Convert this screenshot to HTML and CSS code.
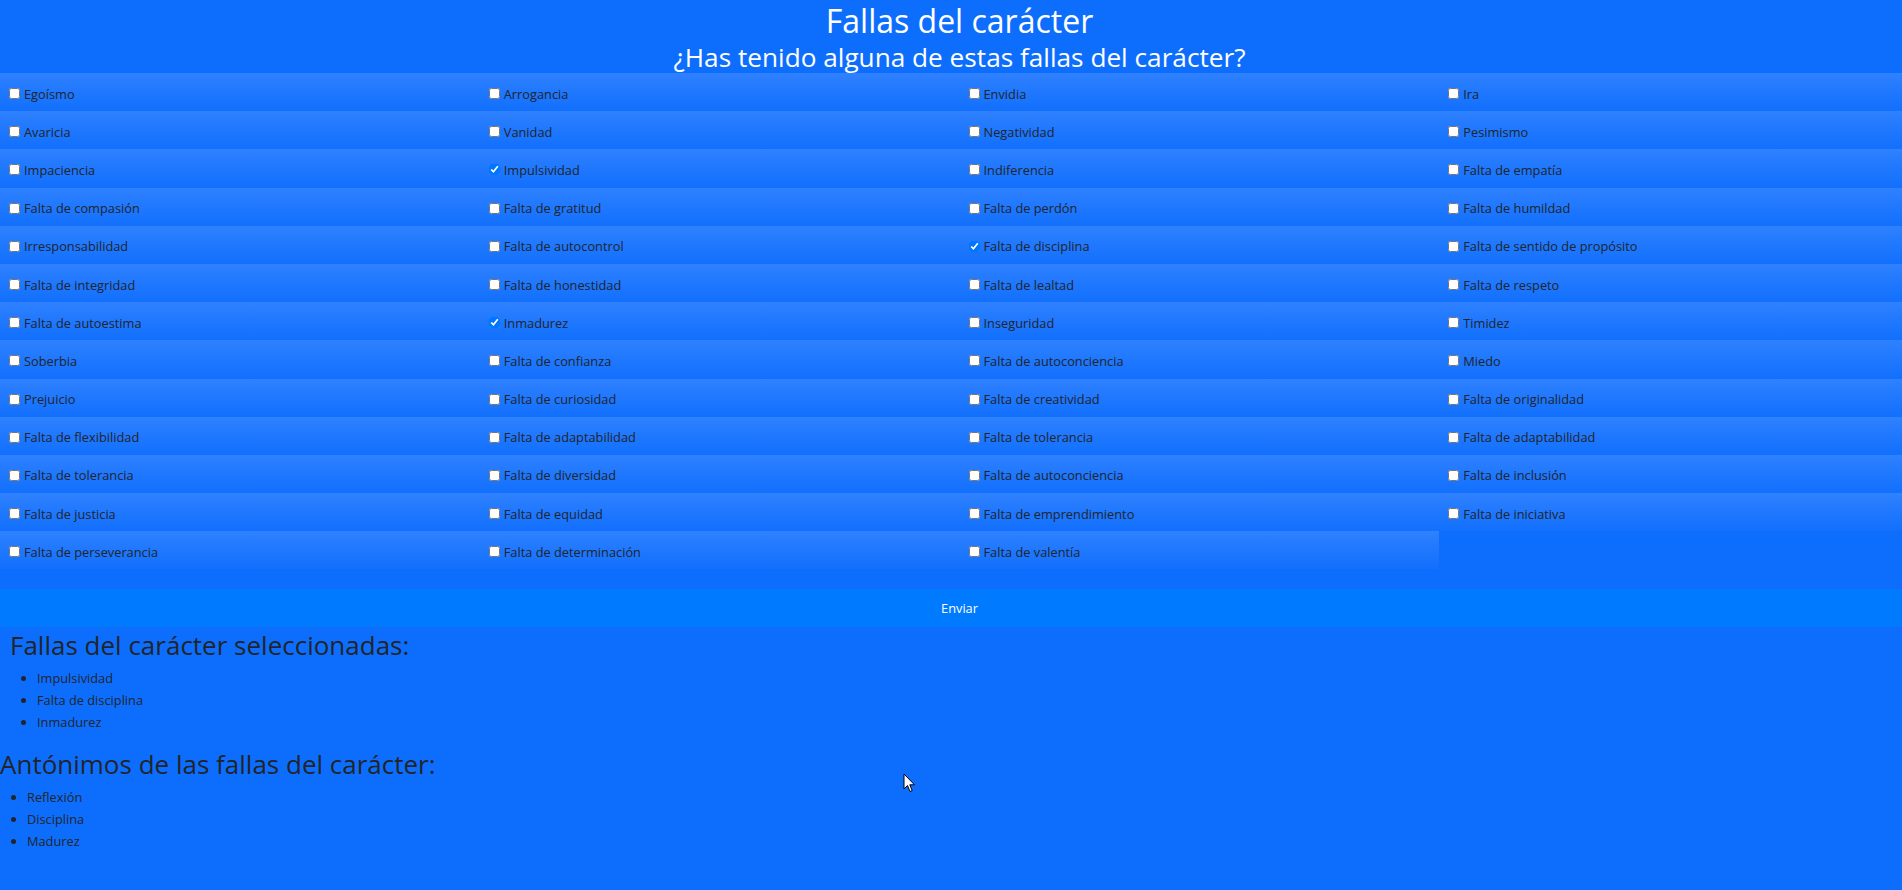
FILE: index.html
```html
<!DOCTYPE html>
<html lang="es">
<head>
<meta charset="utf-8">
<title>Fallas del carácter</title>
<link rel="stylesheet" href="styles.css">
</head>
<body>
<div class="page">
  <header class="header">
    <h1 class="title">Fallas del carácter</h1>
    <p class="subtitle">¿Has tenido alguna de estas fallas del carácter?</p>
  </header>
  <form class="form">
    <div class="grid">
      <label class="item"><input type="checkbox">Egoísmo</label>
      <label class="item"><input type="checkbox">Arrogancia</label>
      <label class="item"><input type="checkbox">Envidia</label>
      <label class="item"><input type="checkbox">Ira</label>
      <label class="item"><input type="checkbox">Avaricia</label>
      <label class="item"><input type="checkbox">Vanidad</label>
      <label class="item"><input type="checkbox">Negatividad</label>
      <label class="item"><input type="checkbox">Pesimismo</label>
      <label class="item"><input type="checkbox">Impaciencia</label>
      <label class="item"><input type="checkbox" checked>Impulsividad</label>
      <label class="item"><input type="checkbox">Indiferencia</label>
      <label class="item"><input type="checkbox">Falta de empatía</label>
      <label class="item"><input type="checkbox">Falta de compasión</label>
      <label class="item"><input type="checkbox">Falta de gratitud</label>
      <label class="item"><input type="checkbox">Falta de perdón</label>
      <label class="item"><input type="checkbox">Falta de humildad</label>
      <label class="item"><input type="checkbox">Irresponsabilidad</label>
      <label class="item"><input type="checkbox">Falta de autocontrol</label>
      <label class="item"><input type="checkbox" checked>Falta de disciplina</label>
      <label class="item"><input type="checkbox">Falta de sentido de propósito</label>
      <label class="item"><input type="checkbox">Falta de integridad</label>
      <label class="item"><input type="checkbox">Falta de honestidad</label>
      <label class="item"><input type="checkbox">Falta de lealtad</label>
      <label class="item"><input type="checkbox">Falta de respeto</label>
      <label class="item"><input type="checkbox">Falta de autoestima</label>
      <label class="item"><input type="checkbox" checked>Inmadurez</label>
      <label class="item"><input type="checkbox">Inseguridad</label>
      <label class="item"><input type="checkbox">Timidez</label>
      <label class="item"><input type="checkbox">Soberbia</label>
      <label class="item"><input type="checkbox">Falta de confianza</label>
      <label class="item"><input type="checkbox">Falta de autoconciencia</label>
      <label class="item"><input type="checkbox">Miedo</label>
      <label class="item"><input type="checkbox">Prejuicio</label>
      <label class="item"><input type="checkbox">Falta de curiosidad</label>
      <label class="item"><input type="checkbox">Falta de creatividad</label>
      <label class="item"><input type="checkbox">Falta de originalidad</label>
      <label class="item"><input type="checkbox">Falta de flexibilidad</label>
      <label class="item"><input type="checkbox">Falta de adaptabilidad</label>
      <label class="item"><input type="checkbox">Falta de tolerancia</label>
      <label class="item"><input type="checkbox">Falta de adaptabilidad</label>
      <label class="item"><input type="checkbox">Falta de tolerancia</label>
      <label class="item"><input type="checkbox">Falta de diversidad</label>
      <label class="item"><input type="checkbox">Falta de autoconciencia</label>
      <label class="item"><input type="checkbox">Falta de inclusión</label>
      <label class="item"><input type="checkbox">Falta de justicia</label>
      <label class="item"><input type="checkbox">Falta de equidad</label>
      <label class="item"><input type="checkbox">Falta de emprendimiento</label>
      <label class="item"><input type="checkbox">Falta de iniciativa</label>
      <label class="item"><input type="checkbox">Falta de perseverancia</label>
      <label class="item"><input type="checkbox">Falta de determinación</label>
      <label class="item"><input type="checkbox">Falta de valentía</label>
    </div>
    <button type="button" class="submit">Enviar</button>
  </form>
  <section class="selected">
    <h2 class="section-title">Fallas del carácter seleccionadas:</h2>
    <ul class="list">
      <li>Impulsividad</li>
      <li>Falta de disciplina</li>
      <li>Inmadurez</li>
    </ul>
  </section>
  <section class="antonyms">
    <h2 class="section-title">Antónimos de las fallas del carácter:</h2>
    <ul class="list">
      <li>Reflexión</li>
      <li>Disciplina</li>
      <li>Madurez</li>
    </ul>
  </section>
  <svg class="cursor" width="13" height="20" viewBox="0 0 13 20" aria-hidden="true">
    <path d="M1 1 L1 16 L4.5 12.5 L7 18.5 L9.2 17.6 L6.8 11.8 L11.5 11.8 Z" fill="#fff" stroke="#000" stroke-width="1" stroke-linejoin="round"/>
  </svg>
</div>
</body>
</html>
```

FILE: styles.css
```css
html {
  background: #0d6efd;
}

body {
  margin: 0;
  overflow: hidden;
  background: #0d6efd;
  font-family: "Open Sans", "Noto Sans", "DejaVu Sans", sans-serif;
  color: #212529;
}

.page {
  position: relative;
  width: 1919px;
  min-height: 890px;
}

.header {
  padding-top: 2px;
  text-align: center;
  color: #ffffff;
}

.title {
  margin: 0;
  font-size: 32px;
  line-height: 38px;
  font-weight: 400;
}

.subtitle {
  margin: 0;
  padding-top: 2px;
  font-size: 26.2px;
  line-height: 31px;
  font-weight: 400;
}

.form {
  margin: 0;
}

.grid {
  display: grid;
  grid-template-columns: repeat(4, 1fr);
  grid-auto-rows: 38.2px;
}

.item {
  display: flex;
  align-items: center;
  box-sizing: border-box;
  padding: 3px 5px 0;
  font-size: 12.8px;
  color: #212529;
  background: linear-gradient(180deg, #2f81ff 0%, #1e77fe 55%, #1270fd 100%);
}

.item input {
  width: 11px;
  height: 11px;
  margin: 3px 4px 3px 4px;
}

.submit {
  display: block;
  width: 100%;
  height: 37.5px;
  margin-top: 20px;
  border: 0;
  padding: 0;
  background: #007bff;
  color: #ffffff;
  font-family: inherit;
  font-size: 12.8px;
}

.selected {
  padding-left: 10px;
}

.section-title {
  margin: 2px 0 0;
  font-size: 26px;
  line-height: 32px;
  font-weight: 400;
  color: #212529;
}

.antonyms .section-title {
  margin-top: 15px;
}

.list {
  margin: 6px 0 0;
  padding-left: 27px;
  font-size: 12.8px;
  line-height: 22px;
}

.cursor {
  position: absolute;
  left: 903px;
  top: 773px;
}
```
